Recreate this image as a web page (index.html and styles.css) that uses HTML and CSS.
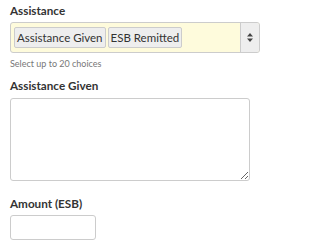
FILE: index.html
```html
<!DOCTYPE html>
<html lang="en">
<head>
    <meta charset="UTF-8">
    <title>Assistance</title>
    <link rel="stylesheet" href="styles.css">
</head>
<body>
    <div class="form">
        <div class="field">
            <label class="label">Assistance</label>
            <div class="multi">
                <div class="chips">
                    <span class="chip">Assistance Given</span>
                    <span class="chip">ESB Remitted</span>
                </div>
                <div class="arrows">
                    <svg width="6" height="9" viewBox="0 0 6 9"><path d="M0 3.5 L3 0 L6 3.5 Z M0 5.5 L3 9 L6 5.5 Z" fill="#444"/></svg>
                </div>
            </div>
            <div class="help">Select up to 20 choices</div>
        </div>
        <div class="field">
            <label class="label">Assistance Given</label>
            <textarea class="textarea"></textarea>
        </div>
        <div class="field">
            <label class="label">Amount (ESB)</label>
            <input type="text" class="input">
        </div>
    </div>
</body>
</html>
```
FILE: styles.css
```css
body {
    margin: 0;
    font-family: Lato, "Open Sans", sans-serif;
    color: #333;
    background: #fff;
}
.form {
    padding: 3px 10px 0 10px;
}
.field {
    margin-bottom: 15px;
}
.field:first-child {
    margin-bottom: 9px;
}
.label {
    display: block;
    font-size: 11.7px;
    font-weight: bold;
    color: #333;
    margin-bottom: 6px;
}
.field:first-child .label,
.field:last-child .label {
    margin-bottom: 5px;
}
.multi {
    display: flex;
    width: 250px;
    height: 31px;
    box-sizing: border-box;
    border: 1px solid #ccc;
    border-radius: 3px;
    background: #fefbdc;
    overflow: hidden;
}
.chips {
    flex: 1;
    display: flex;
    align-items: center;
    gap: 2px;
    padding-left: 3px;
}
.chip {
    background: #eee;
    border: 1px solid #ccc;
    border-radius: 2px;
    font-size: 11.5px;
    padding: 3px 2px;
    color: #333;
}
.arrows {
    width: 18px;
    background: #eee;
    border-left: 1px solid #ccc;
    display: flex;
    align-items: center;
    justify-content: center;
}
.help {
    font-size: 9px;
    color: #777;
    margin-top: 5px;
}
.textarea {
    display: block;
    width: 240px;
    height: 83px;
    box-sizing: border-box;
    border: 1px solid #ccc;
    border-radius: 3px;
    margin: 0;
    resize: vertical;
}
.input {
    display: block;
    width: 86px;
    height: 25px;
    box-sizing: border-box;
    border: 1px solid #ccc;
    border-radius: 3px;
    margin: 0;
}
```
